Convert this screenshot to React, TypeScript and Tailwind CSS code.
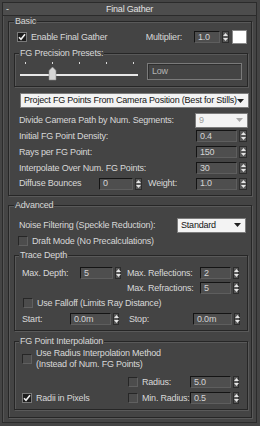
import type { ReactNode } from "react"

function Box({ label, className = "", children }: { label: string; className?: string; children: ReactNode }) {
  return (
    <fieldset className={`min-w-0 border border-[#262626] shadow-[inset_1px_1px_0_#595959,1px_1px_0_#595959] ${className}`}>
      <legend className="h-[10px] leading-[10px] px-[1px] bg-[#444444] text-[#d8d8d8] whitespace-nowrap">{label}</legend>
      {children}
    </fieldset>
  )
}

function Check({ on }: { on?: boolean }) {
  return (
    <span
      className={`w-[10px] h-[10px] shrink-0 flex items-center justify-center border ${
        on
          ? "bg-[#1c1c1c] border-[#7a7a7a]"
          : "bg-[#4c4c4c] border-t-[#262626] border-l-[#262626] border-b-[#606060] border-r-[#606060]"
      }`}
    >
      {on && (
        <svg width="8" height="8" viewBox="0 0 8 8">
          <path d="M1 4.2l2 2.1L7 1.3" fill="none" stroke="#f2f2f2" strokeWidth="1.6" />
        </svg>
      )}
    </span>
  )
}

function Arrows({ w = "w-[7px]" }: { w?: string }) {
  return (
    <span className={`${w} h-[12px] shrink-0 flex flex-col items-center justify-center gap-[2px] bg-[#585858] border border-[#2c2c2c]`}>
      <svg width="5" height="3" viewBox="0 0 5 3"><path d="M0 3L2.5 0L5 3Z" fill="#e6e6e6" /></svg>
      <svg width="5" height="3" viewBox="0 0 5 3"><path d="M0 0L2.5 3L5 0Z" fill="#e6e6e6" /></svg>
    </span>
  )
}

function Spin({ v, w, aw }: { v: string; w: string; aw?: string }) {
  return (
    <span className="flex items-center gap-[2px] shrink-0">
      <span className={`${w} h-[12px] flex items-center pl-[3px] bg-[#4e4e4e] border border-t-[#141414] border-l-[#141414] border-b-[#5e5e5e] border-r-[#5e5e5e] text-[#d4d4d4]`}>
        {v}
      </span>
      <Arrows w={aw} />
    </span>
  )
}

function Drop({ v, w, dim }: { v: string; w: string; dim?: boolean }) {
  return (
    <span
      className={`${w} h-[15px] shrink-0 flex items-center justify-between pl-[3px] pr-[4px] bg-[#f3f3f3] border border-[#7c7c7c] ${
        dim ? "text-[#9c9c9c]" : "text-[#141414]"
      }`}
    >
      <span className="whitespace-nowrap">{v}</span>
      <svg width="7" height="4" viewBox="0 0 7 4"><path d="M0 0h7L3.5 4z" fill={dim ? "#a8a8a8" : "#202020"} /></svg>
    </span>
  )
}

export default function App() {
  return (
    <div className="w-[260px] h-[426px] overflow-hidden bg-[#444444] text-[9px] tracking-[-0.2px] leading-none text-[#d8d8d8] whitespace-nowrap font-['Liberation_Sans',Arial,sans-serif]">
      <div className="mt-[2px] ml-[2px] w-[255px] h-[421px] border border-[#2b2b2b] shadow-[inset_1px_0_0_#555555]">
        {/* rollout title */}
        <div className="h-[13px] bg-[#4d4d4d] border-b border-[#2b2b2b] grid grid-cols-[20px_1fr_20px] items-center text-[#e2e2e2]">
          <span className="pl-[3px]">-</span>
          <span className="text-center">Final Gather</span>
          <span />
        </div>

        {/* Basic */}
        <Box label="Basic" className="ml-[5px] w-[244px] pl-[5px] pr-[3px] pb-[4px]">
          <div className="mt-[4px] h-[14px] flex items-center">
            <span className="ml-[3px]"><Check on /></span>
            <span className="ml-[4px]">Enable Final Gather</span>
            <span className="ml-auto">Multiplier:</span>
            <span className="ml-[12px]"><Spin v="1.0" w="w-[26px]" /></span>
            <span className="ml-[3px] mr-[1px] w-[15px] h-[14px] bg-white border border-[#8a8a8a]" />
          </div>

          <Box label="FG Precision Presets:" className="mt-[4px] pl-[4px] pr-[4px] pb-[5px]">
            <div className="mt-[3px] h-[20px] flex items-center">
              <svg width="120" height="20" viewBox="0 0 120 20">
                {[6, 33, 60, 87, 114].map(x => (
                  <rect key={x} x={x} y="1" width="1" height="2" fill="#dcdcdc" />
                ))}
                <rect x="1" y="13" width="118" height="2" fill="#e8e8e8" />
                <path d="M30 9.5L33.5 6L37 9.5V19H30Z" fill="#d6d6d6" stroke="#8a8a8a" strokeWidth="0.6" />
              </svg>
              <span className="ml-auto mr-[1px] w-[95px] h-[17px] flex items-center pl-[4px] border border-[#7a7a7a] shadow-[inset_1px_1px_0_#2e2e2e] text-[#b4b4b4]">
                Low
              </span>
            </div>
          </Box>

          <div className="mt-[6px] h-[15px] flex">
            <span className="ml-[6px] flex-1 flex">
              <Drop v="Project FG Points From Camera Position (Best for Stills)" w="w-full" />
            </span>
          </div>

          <div className="mt-[4px] h-[16px] flex items-center">
            <span className="ml-[5px]">Divide Camera Path by Num. Segments:</span>
            <span className="ml-auto"><Drop v="9" w="w-[53px]" dim /></span>
          </div>
          {[
            ["Initial FG Point Density:", "0.4"],
            ["Rays per FG Point:", "150"],
            ["Interpolate Over Num. FG Points:", "30"],
          ].map(([l, v]) => (
            <div key={l} className="h-[16px] flex items-center">
              <span className="ml-[5px]">{l}</span>
              <span className="ml-auto mr-[1px]"><Spin v={v} w="w-[41px]" aw="w-[8px]" /></span>
            </div>
          ))}
          <div className="h-[15px] flex items-center">
            <span className="ml-[5px] w-[80px]">Diffuse Bounces</span>
            <Spin v="0" w="w-[34px]" />
            <span className="ml-[6px]">Weight:</span>
            <span className="ml-auto mr-[1px]"><Spin v="1.0" w="w-[41px]" aw="w-[8px]" /></span>
          </div>
        </Box>

        {/* Advanced */}
        <Box label="Advanced" className="mt-[4px] ml-[5px] w-[244px] pl-[5px] pr-[3px] pb-[7px]">
          <div className="mt-[7px] h-[16px] flex items-center">
            <span className="ml-[5px]">Noise Filtering (Speckle Reduction):</span>
            <span className="ml-auto mr-[2px]"><Drop v="Standard" w="w-[69px]" /></span>
          </div>
          <div className="mt-[1px] h-[14px] flex items-center">
            <span className="ml-[4px]"><Check /></span>
            <span className="ml-[4px]">Draft Mode (No Precalculations)</span>
          </div>

          <Box label="Trace Depth" className="mt-[2px] pl-[4px] pr-[4px] pb-[4px]">
            <div className="mt-[6px] h-[14px] flex items-center">
              <span className="ml-[3px] w-[58px]">Max. Depth:</span>
              <Spin v="5" w="w-[33px]" aw="w-[6px]" />
              <span className="ml-[6px] w-[73px]">Max. Reflections:</span>
              <Spin v="2" w="w-[31px]" aw="w-[6px]" />
            </div>
            <div className="mt-[1px] h-[14px] flex items-center">
              <span className="ml-[108px] w-[73px]">Max. Refractions:</span>
              <Spin v="5" w="w-[31px]" aw="w-[6px]" />
            </div>
            <div className="mt-[1px] h-[14px] flex items-center">
              <span className="ml-[4px]"><Check /></span>
              <span className="ml-[4px]">Use Falloff (Limits Ray Distance)</span>
            </div>
            <div className="mt-[2px] h-[14px] flex items-center">
              <span className="ml-[3px] w-[48px]">Start:</span>
              <Spin v="0.0m" w="w-[41px]" aw="w-[6px]" />
              <span className="ml-[10px] w-[64px]">Stop:</span>
              <Spin v="0.0m" w="w-[39px]" aw="w-[6px]" />
            </div>
          </Box>

          <Box label="FG Point Interpolation" className="mt-[5px] pl-[4px] pr-[4px] pb-[4px]">
            <div className="mt-[2px] h-[22px] flex items-center">
              <span className="ml-[3px]"><Check /></span>
              <span className="ml-[4px] leading-[11px]">
                Use Radius Interpolation Method
                <br />
                (Instead of Num. FG Points)
              </span>
            </div>
            <div className="mt-[5px] h-[14px] flex items-center">
              <span className="ml-[109px]"><Check /></span>
              <span className="ml-[4px] w-[48px]">Radius:</span>
              <Spin v="5.0" w="w-[41px]" aw="w-[6px]" />
            </div>
            <div className="mt-[2px] h-[14px] flex items-center">
              <span className="ml-[3px]"><Check on /></span>
              <span className="ml-[4px] w-[92px]">Radii in Pixels</span>
              <Check />
              <span className="ml-[4px] w-[48px]">Min. Radius:</span>
              <Spin v="0.5" w="w-[41px]" aw="w-[6px]" />
            </div>
          </Box>
        </Box>
      </div>
    </div>
  )
}
